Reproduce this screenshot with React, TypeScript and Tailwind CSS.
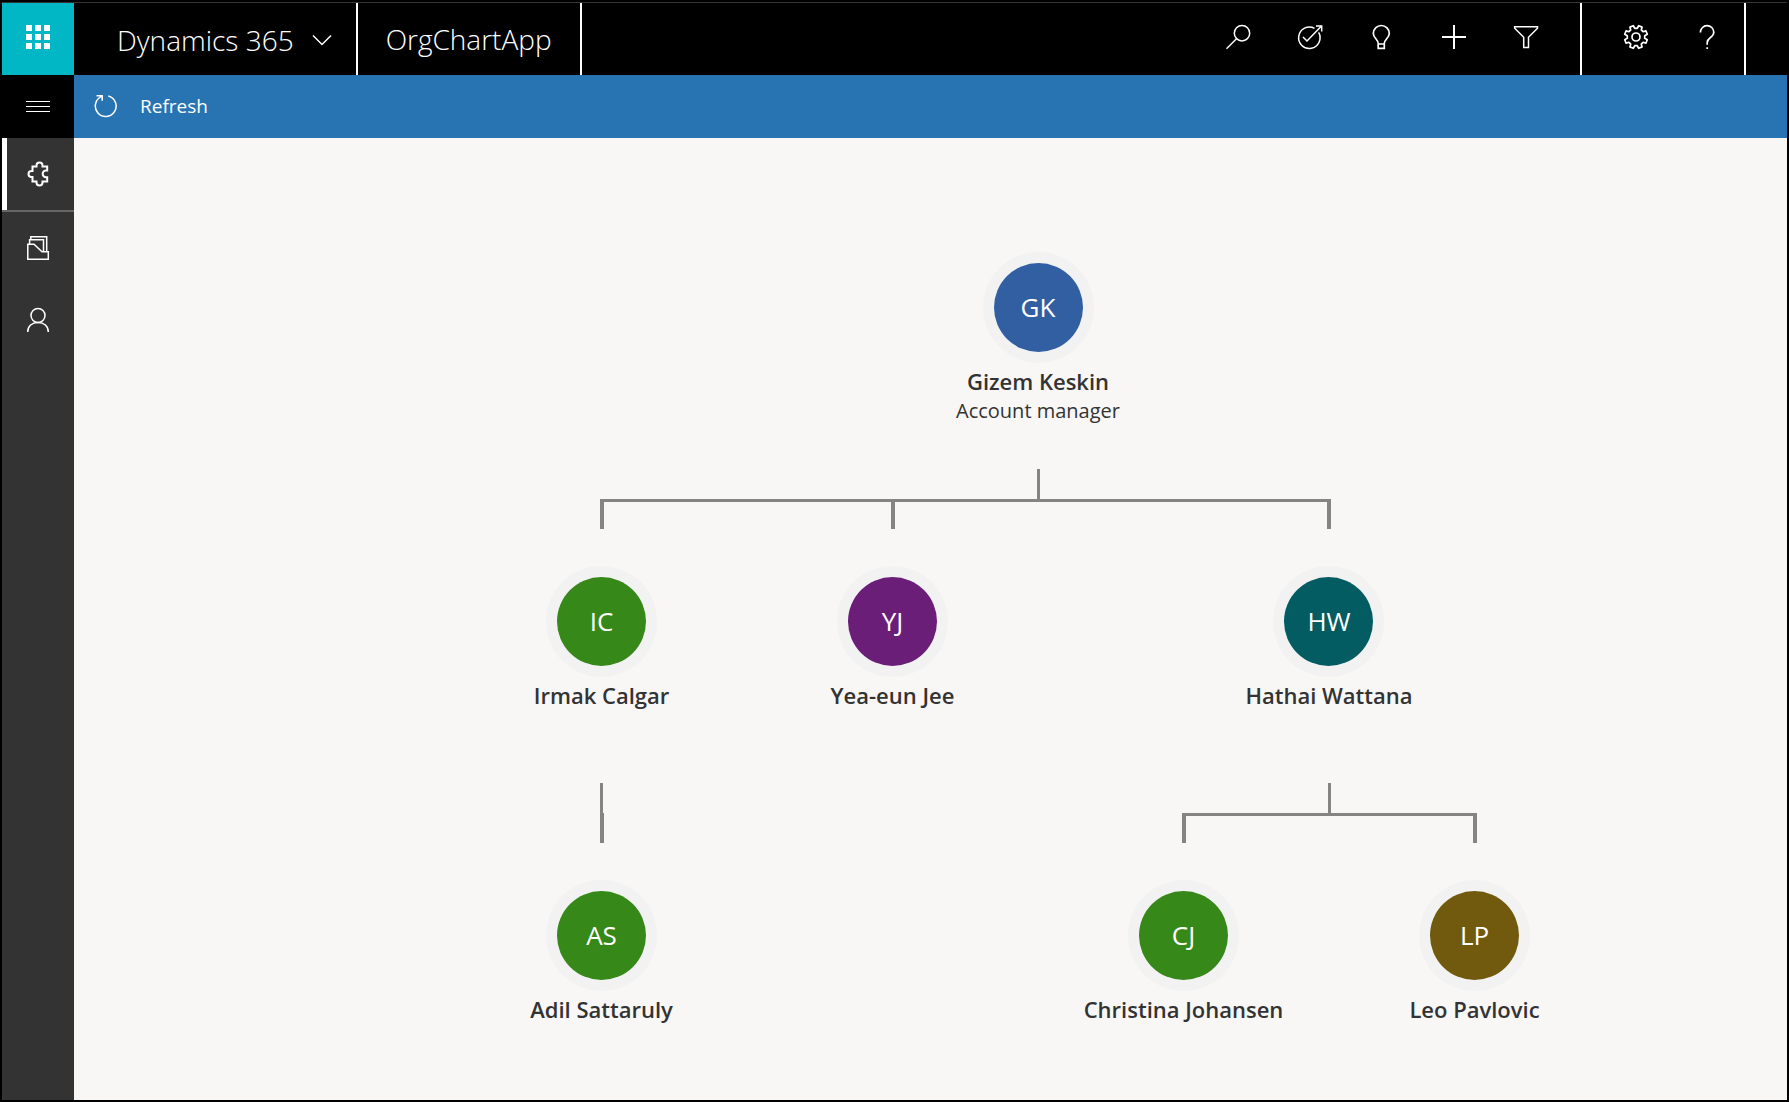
import type { ReactNode } from "react";

type Person = {
  initials: string;
  name: string;
  title?: string;
  color: string;
  reports?: Person[];
};

const root: Person = {
  initials: "GK",
  name: "Gizem Keskin",
  title: "Account manager",
  color: "bg-[#325fa2]",
  reports: [
    {
      initials: "IC",
      name: "Irmak Calgar",
      color: "bg-[#368818]",
      reports: [{ initials: "AS", name: "Adil Sattaruly", color: "bg-[#368818]" }],
    },
    { initials: "YJ", name: "Yea-eun Jee", color: "bg-[#6b1e78]" },
    {
      initials: "HW",
      name: "Hathai Wattana",
      color: "bg-[#025c61]",
      reports: [
        { initials: "CJ", name: "Christina Johansen", color: "bg-[#368818]" },
        { initials: "LP", name: "Leo Pavlovic", color: "bg-[#715a0d]" },
      ],
    },
  ],
};

function Icon({ children, width = 1.5 }: { children: ReactNode; width?: number }) {
  return (
    <svg
      viewBox="0 0 24 24"
      className="size-6 overflow-visible"
      fill="none"
      stroke="currentColor"
      strokeWidth={width}
      aria-hidden="true"
    >
      {children}
    </svg>
  );
}

function gearPath(teeth: number, outer: number, inner: number) {
  const step = (Math.PI * 2) / teeth;
  const points: string[] = [];
  for (let i = 0; i < teeth; i++) {
    const mid = (i + 0.5) * step;
    const corners: [number, number][] = [
      [inner, -0.32],
      [outer, -0.2],
      [outer, 0.2],
      [inner, 0.32],
    ];
    for (const [r, t] of corners) {
      const a = mid + t * step;
      points.push(`${(12 + r * Math.sin(a)).toFixed(2)} ${(12 - r * Math.cos(a)).toFixed(2)}`);
    }
  }
  return `M${points.join("L")}Z`;
}

const headerActions: { label: string; icon: ReactNode }[] = [
  {
    label: "Search",
    icon: (
      <Icon>
        <circle cx="16" cy="8.2" r="7.7" />
        <path d="M10.5 13.7 0.5 23.7" />
      </Icon>
    ),
  },
  {
    label: "Task flow",
    icon: (
      <Icon>
        <path d="M16.5 3.4A10.7 10.7 0 1 0 20.6 7.4" />
        <path d="M5 12 9 16 23.5 1M18 1H23.7V6.5" />
      </Icon>
    ),
  },
  {
    label: "Assistant",
    icon: (
      <Icon width={1.7}>
        <path d="M8.2 18.5C8.2 14.5 3.3 13 3.3 8.5A8 8 0 0 1 19.3 8.5C19.3 13 14.3 14.5 14.3 18.5V23.3H8.2ZM8.2 19H14.3" />
      </Icon>
    ),
  },
  {
    label: "New",
    icon: (
      <Icon width={2}>
        <path d="M12 0V24M0 12H24" />
      </Icon>
    ),
  },
  {
    label: "Advanced find",
    icon: (
      <Icon>
        <path d="M0.7 1.7H23.5V3.2L14.5 12.2V22.5H9.7V12.2L0.7 3.2Z" />
      </Icon>
    ),
  },
];

const settingsActions: { label: string; icon: ReactNode }[] = [
  {
    label: "Settings",
    icon: (
      <Icon width={1.7}>
        <path d={gearPath(8, 11.6, 8.8)} strokeLinejoin="round" />
        <circle cx="12" cy="12" r="4" />
      </Icon>
    ),
  },
  {
    label: "Help",
    icon: (
      <Icon width={1.7}>
        <path d="M4.4 7.5A6.6 6.6 0 0 1 17.8 7.2C17.8 12.5 11.2 12.5 11.2 17.5V19.8M11.2 22.2V24" />
      </Icon>
    ),
  },
];

const navItems: { label: string; active?: boolean; icon: ReactNode }[] = [
  {
    label: "Org chart",
    active: true,
    icon: (
      <Icon width={2}>
        <path d="M6.5 4.5H10.5V3.5A3 3 0 0 1 16.5 3.5V4.5H21.2V8.5H20A3.2 3.2 0 0 0 20 15.2H21.2V19.5H16.5V20.5A3 3 0 0 1 10.5 20.5V19.5H6.5V15H5.5A3 3 0 0 1 5.5 9H6.5Z" />
      </Icon>
    ),
  },
  {
    label: "Accounts",
    icon: (
      <Icon>
        <path d="M1.8 8.3H8L16 15.8H22.3V23.3H1.8ZM4.8 4V0.8H20.7V15.5M3.6 8V3.8H17.5V15.5" />
      </Icon>
    ),
  },
  {
    label: "Contacts",
    icon: (
      <Icon>
        <circle cx="12" cy="7.5" r="7" />
        <path d="M1.7 24C1.7 18 6 14.5 12 14.5S22.3 18 22.3 24" />
      </Icon>
    ),
  },
];

function HeaderButton({ label, children }: { label: string; children: ReactNode }) {
  return (
    <button type="button" aria-label={label} className="flex w-18 items-center justify-center pb-1">
      {children}
    </button>
  );
}

function Header() {
  return (
    <header className="flex h-18 items-stretch bg-black text-white">
      <button
        type="button"
        aria-label="App launcher"
        className="flex w-18 items-center justify-center bg-[#02b7c5] pb-1"
      >
        <span className="grid grid-cols-3 gap-[3px]">
          {Array.from({ length: 9 }, (_, i) => (
            <span key={i} className="size-1.5 bg-white" />
          ))}
        </span>
      </button>
      <button
        type="button"
        className="flex items-center gap-[18px] border-r-2 border-white pt-0.5 pr-6 pl-[43px] text-[28px] font-light"
      >
        Dynamics 365
        <svg
          viewBox="0 0 20 12"
          className="h-3 w-5"
          fill="none"
          stroke="currentColor"
          strokeWidth="1.5"
          aria-hidden="true"
        >
          <path d="M1 1.5 10 10.5 19 1.5" />
        </svg>
      </button>
      <a href="#home" className="flex items-center border-r-2 border-white px-7 text-[28px] font-light">
        OrgChartApp
      </a>
      <div className="ml-auto flex pr-[18px]">
        {headerActions.map((a) => (
          <HeaderButton key={a.label} label={a.label}>
            {a.icon}
          </HeaderButton>
        ))}
      </div>
      <div className="mr-[41px] flex border-x-2 border-white pl-[18px]">
        {settingsActions.map((a) => (
          <HeaderButton key={a.label} label={a.label}>
            {a.icon}
          </HeaderButton>
        ))}
      </div>
    </header>
  );
}

function Sidebar() {
  return (
    <nav className="flex w-18 shrink-0 flex-col bg-[#333333] text-white">
      <button type="button" aria-label="Site map" className="flex h-[63px] items-center justify-center bg-black">
        <span className="flex w-6 flex-col gap-1">
          <span className="h-px bg-white" />
          <span className="h-px bg-white" />
          <span className="h-px bg-white" />
        </span>
      </button>
      {navItems.map((item) => (
        <a
          key={item.label}
          href="#nav"
          aria-label={item.label}
          className={item.active ? "border-b-2 border-[#666666]" : ""}
        >
          <span
            className={
              item.active
                ? "flex h-18 items-center justify-center border-l-5 border-white pr-[5px]"
                : "flex h-18 items-center justify-center"
            }
          >
            {item.icon}
          </span>
        </a>
      ))}
    </nav>
  );
}

function CommandBar() {
  return (
    <div className="flex h-[63px] items-center bg-[#2874b2] pl-5 text-white">
      <button type="button" className="flex items-center gap-[22px] text-[19px]">
        <svg
          viewBox="0 0 24 24"
          className="size-6"
          fill="none"
          stroke="currentColor"
          strokeWidth="1.5"
          aria-hidden="true"
        >
          <path d="M14.3 1A10.4 10.4 0 1 1 7.9 1.4M2.5 0.8H8.2V5.8" />
        </svg>
        Refresh
      </button>
    </div>
  );
}

function PersonCard({ person }: { person: Person }) {
  return (
    <div className="flex h-[217px] flex-col items-center whitespace-nowrap">
      <div className="flex size-[111px] items-center justify-center rounded-full bg-[#f2f2f2]">
        <div
          className={`flex size-[89px] items-center justify-center rounded-full text-[26px] text-white ${person.color}`}
        >
          {person.initials}
        </div>
      </div>
      <div className="mt-1 text-[22px] leading-7 font-semibold text-[#333333]">{person.name}</div>
      {person.title && <div className="text-xl leading-8 text-[#333333]">{person.title}</div>}
    </div>
  );
}

function Branch({ person }: { person: Person }) {
  const reports = person.reports ?? [];
  return (
    <div className="flex min-w-[291px] flex-col items-center">
      <PersonCard person={person} />
      {reports.length > 0 && (
        <>
          <div className="h-[30px] w-[3px] bg-[#848482]" />
          <div className="flex">
            {reports.map((report, i) => (
              <div key={report.name} className="flex flex-col">
                <div className="mb-[37px] flex h-[30px]">
                  <div className={`flex-1 border-r-2 border-[#848482] ${i > 0 ? "border-t-3" : ""}`} />
                  <div
                    className={`flex-1 border-l-2 border-[#848482] ${i < reports.length - 1 ? "border-t-3" : ""}`}
                  />
                </div>
                <Branch person={report} />
              </div>
            ))}
          </div>
        </>
      )}
    </div>
  );
}

export default function App() {
  return (
    <div className="flex min-h-screen flex-col border-2 border-black bg-black font-['Open_Sans','Noto_Sans',sans-serif]">
      <div className="h-px bg-[#333333]" />
      <Header />
      <div className="flex flex-1">
        <Sidebar />
        <div className="flex min-w-0 flex-1 flex-col">
          <CommandBar />
          <main className="flex flex-1 justify-center bg-[#f8f7f6] pt-[114px] pl-[215px]">
            <Branch person={root} />
          </main>
        </div>
      </div>
    </div>
  );
}
